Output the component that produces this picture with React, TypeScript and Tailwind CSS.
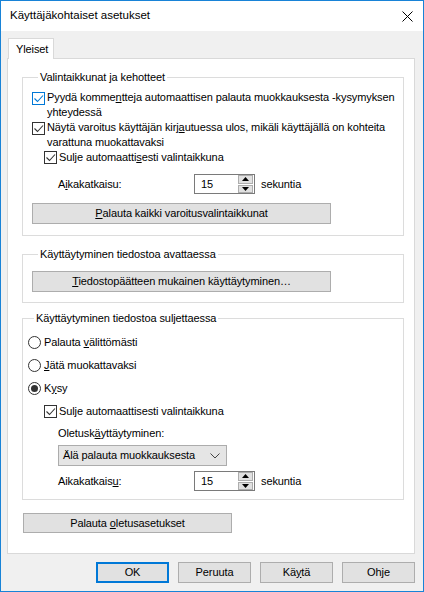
import type { ReactNode } from 'react';

const font = "font-['Segoe_UI','Liberation_Sans',Arial,sans-serif]";

function Check({ focused = false }: { focused?: boolean }) {
  const c = focused ? '#0078d7' : '#333333';
  return (
    <svg width="13" height="13" viewBox="0 0 13 13" className="shrink-0">
      <rect x="0.5" y="0.5" width="12" height="12" fill="white" stroke={c} />
      <path d="M2.5 6.5l3 3 5.5-6" fill="none" stroke={c} strokeWidth="1.1" />
    </svg>
  );
}

function Radio({ checked = false }: { checked?: boolean }) {
  return (
    <svg width="13" height="13" viewBox="0 0 13 13" className="shrink-0">
      <circle cx="6.5" cy="6.5" r="6" fill="white" stroke="#333333" />
      {checked && <circle cx="6.5" cy="6.5" r="3.5" fill="#333333" />}
    </svg>
  );
}

function Btn({ children, className = '' }: { children: ReactNode; className?: string }) {
  return (
    <div
      className={`flex items-center justify-center bg-[#e1e1e1] border border-[#adadad] leading-[15px] ${className}`}
    >
      {children}
    </div>
  );
}

function Spin() {
  return (
    <div className="flex items-center gap-[6px]">
      <div className="w-[61px] h-[20px] border border-[#7a7a7a] bg-white flex items-center">
        <span className="pl-[6px] flex-1">15</span>
        <div className="w-[16px] h-[18px] flex flex-col gap-[1px] pr-[1px]">
          <div className="flex-1 bg-[#e1e1e1] border border-[#adadad] flex items-center justify-center">
            <svg width="7" height="4" viewBox="0 0 7 4">
              <path d="M0 4h7L3.5 0z" fill="#000" />
            </svg>
          </div>
          <div className="flex-1 bg-[#e1e1e1] border border-[#adadad] flex items-center justify-center">
            <svg width="7" height="4" viewBox="0 0 7 4">
              <path d="M0 0h7L3.5 4z" fill="#000" />
            </svg>
          </div>
        </div>
      </div>
      <span>sekuntia</span>
    </div>
  );
}

function Legend({ children }: { children: ReactNode }) {
  return <legend className="ml-[6px] px-[2px] leading-[16px]">{children}</legend>;
}

export default function App() {
  return (
    <div
      className={`w-[424px] h-[592px] border border-[#1883d7] bg-[#f0f0f0] flex flex-col text-[11px] tracking-[-0.1px] text-[#000] ${font}`}
    >
      {/* Title bar */}
      <div className="h-[30px] bg-white flex items-center justify-between pl-[9px] pr-[10px]">
        <span className="text-[11.5px] tracking-normal">Käyttäjäkohtaiset asetukset</span>
        <svg width="11" height="11" viewBox="0 0 11 11">
          <path d="M0.5 0.5l10 10M10.5 0.5l-10 10" stroke="#000" strokeWidth="1" />
        </svg>
      </div>

      {/* Body */}
      <div className="flex-1 px-[6px] pt-[7px]">
        <div className="ml-[1px] w-[46px] h-[21px] -mb-px relative bg-white border border-b-0 border-[#d9d9d9] pl-[7px] pt-[3px] leading-[15px]">
          Yleiset
        </div>
        <div className="w-[408px] h-[496px] bg-white border border-[#d9d9d9] pl-[14px] pt-[10px] flex flex-col">
          {/* Group 1 */}
          <fieldset className="w-[382px] border border-[#dcdcdc] pl-[9px] pt-[5px] pb-[11px]">
            <Legend>Valintaikkunat ja kehotteet</Legend>
            <div className="flex items-start gap-[2px] h-[30px] leading-[15px]">
              <div className="mt-[2px]"><Check focused /></div>
              <span className="whitespace-nowrap">
                Pyydä komme<u>n</u>tteja automaattisen palauta muokkauksesta -kysymyksen
                <br />
                yhteydessä
              </span>
            </div>
            <div className="flex items-start gap-[2px] h-[30px] leading-[15px]">
              <div className="mt-[2px]"><Check /></div>
              <span className="whitespace-nowrap">
                Näytä varoitus käyttäjän kirj<u>a</u>utuessa ulos, mikäli käyttäjällä on kohteita
                <br />
                varattuna muokattavaksi
              </span>
            </div>
            <div className="flex items-start gap-[2px] h-[15px] leading-[15px] ml-[12px]">
              <div className="mt-[1px]"><Check /></div>
              <span className="whitespace-nowrap">
                Sulje automaatti<u>s</u>esti valintaikkuna
              </span>
            </div>
            <div className="mt-[9px] h-[20px] flex items-center ml-[26px]">
              <span className="w-[136px]">A<u>i</u>kakatkaisu:</span>
              <Spin />
            </div>
            <Btn className="mt-[9px] w-[299px] h-[21px]">
              <span><u>P</u>alauta kaikki varoitusvalintaikkunat</span>
            </Btn>
          </fieldset>

          {/* Group 2 */}
          <fieldset className="mt-[10px] w-[382px] border border-[#dcdcdc] pl-[9px] pt-[9px] pb-[10px]">
            <Legend>Käyttäytyminen tiedostoa avattaessa</Legend>
            <Btn className="w-[299px] h-[21px]">
              <span><u>T</u>iedostopäätteen mukainen käyttäytyminen…</span>
            </Btn>
          </fieldset>

          {/* Group 3 */}
          <fieldset className="mt-[7px] w-[382px] border border-[#dcdcdc] pl-[5px] pt-[5px] pb-[8px]">
            <Legend>Käyttäytyminen tiedostoa suljettaessa</Legend>
            <div className="h-[23px] flex items-center gap-[3px]">
              <Radio />
              <span>Palauta <u>v</u>älittömästi</span>
            </div>
            <div className="h-[23px] flex items-center gap-[3px]">
              <Radio />
              <span><u>J</u>ätä muokattavaksi</span>
            </div>
            <div className="h-[23px] flex items-center gap-[3px]">
              <Radio checked />
              <span>K<u>y</u>sy</span>
            </div>
            <div className="h-[23px] flex items-center gap-[2px] ml-[16px]">
              <Check />
              <span>Sulje automaattisesti valintaikkuna</span>
            </div>
            <div className="mt-[2px] h-[16px] leading-[16px] ml-[30px]">
              Oletusk<u>ä</u>yttäytyminen:
            </div>
            <div className="mt-[4px] ml-[30px] w-[169px] h-[21px] bg-[#e5e5e5] border border-[#acacac] flex items-center justify-between pl-[4px] pr-[6px]">
              <span>Älä palauta muokkauksesta</span>
              <svg width="10" height="6" viewBox="0 0 10 6">
                <path d="M0.5 0.5l4.5 4.5 4.5-4.5" fill="none" stroke="#444" strokeWidth="1" />
              </svg>
            </div>
            <div className="mt-[5px] h-[20px] flex items-center ml-[30px]">
              <span className="w-[136px]">Aikakatkais<u>u</u>:</span>
              <Spin />
            </div>
          </fieldset>

          <Btn className="mt-[13px] ml-[1px] w-[209px] h-[20px]">
            <span>Palauta <u>o</u>letusasetukset</span>
          </Btn>
        </div>

        {/* Dialog buttons */}
        <div className="mt-[8px] flex justify-end gap-[9px] pr-[2px]">
          <Btn className="w-[73px] h-[21px] !border-2 !border-[#0078d7]">OK</Btn>
          <Btn className="w-[73px] h-[21px]">Peruuta</Btn>
          <Btn className="w-[73px] h-[21px]">
            <span>Kä<u>y</u>tä</span>
          </Btn>
          <Btn className="w-[73px] h-[21px]">Ohje</Btn>
        </div>
      </div>
    </div>
  );
}
